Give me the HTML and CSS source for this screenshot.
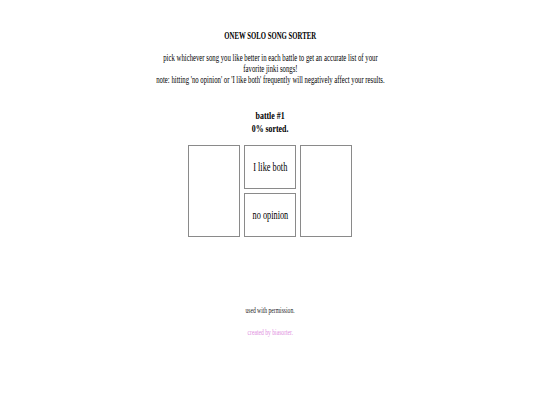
FILE: index.html
```html
<!DOCTYPE html>
<html>
<head>
<meta charset="utf-8">
<link rel="stylesheet" href="styles.css">
</head>
<body>
<div class="page">
  <div class="title"><span class="sq">ONEW SOLO SONG SORTER</span></div>
  <div class="intro"><span class="sq">pick whichever song you like better in each battle to get an accurate list of your<br>favorite jinki songs!<br>note: hitting 'no opinion' or 'I like both' frequently will negatively affect your results.</span></div>
  <div class="progress"><span class="sq">battle #1<br>0% sorted.</span></div>
  <div class="sorter">
    <div class="card side"></div>
    <div class="middle">
      <div class="card choice"><span class="sq">I like both</span></div>
      <div class="card choice"><span class="sq">no opinion</span></div>
    </div>
    <div class="card side"></div>
  </div>
  <div class="footer">
    <div class="perm"><span class="sq">used with permission.</span></div>
    <div class="credit"><span class="sq">created by biasorter.</span></div>
  </div>
</div>
</body>
</html>
```
FILE: styles.css
```css
html, body {
  margin: 0;
  padding: 0;
  background: #ffffff;
}
body {
  font-family: "Liberation Serif", "Times New Roman", serif;
  font-size: 9.6px;
  color: #000000;
}
.page {
  display: flex;
  flex-direction: column;
  align-items: center;
  text-align: center;
  padding-top: 30px;
}
.sq {
  display: inline-block;
  transform: scaleX(0.703);
  transform-origin: center;
  white-space: nowrap;
}
.title {
  font-weight: bold;
  line-height: 11px;
}
.intro {
  margin-top: 11px;
  line-height: 11px;
}
.progress {
  margin-top: 24px;
  font-weight: bold;
  font-size: 11.2px;
  line-height: 12.9px;
}
.sorter {
  margin-top: 10px;
  display: flex;
  gap: 4px;
  height: 92px;
}
.card {
  box-sizing: border-box;
  border: 1px solid #8a8a8a;
  width: 52px;
}
.side {
  height: 92px;
}
.middle {
  display: flex;
  flex-direction: column;
  gap: 4px;
}
.choice {
  height: 44px;
  display: flex;
  align-items: center;
  justify-content: center;
  padding-top: 1px;
  font-size: 11.8px;
}
.footer {
  margin-top: 69px;
  font-size: 8px;
  line-height: 9.2px;
}
.perm {
  color: #222222;
}
.credit {
  margin-top: 13px;
  color: #e08ee0;
}
```
